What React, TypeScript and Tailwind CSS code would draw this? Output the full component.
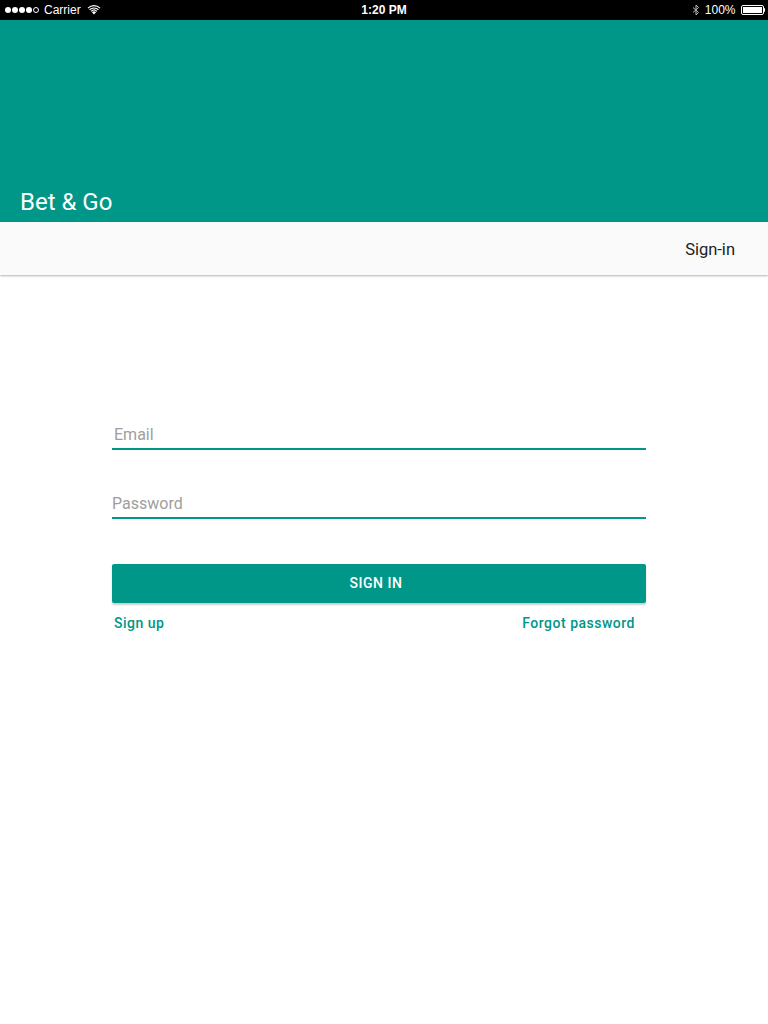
import React from "react";

function Wifi() {
  return (
    <svg width="14" height="10" viewBox="0 0 14 10" fill="white">
      <path d="M7 9.5 L4.9 7.2 A3 3 0 0 1 9.1 7.2 Z" />
      <path d="M3.7 5.9 A4.8 4.8 0 0 1 10.3 5.9 L9.5 6.8 A3.6 3.6 0 0 0 4.5 6.8 Z" />
      <path d="M2.2 4.3 A7 7 0 0 1 11.8 4.3 L11 5.2 A5.8 5.8 0 0 0 3 5.2 Z" />
      <path d="M0.6 2.7 A9.2 9.2 0 0 1 13.4 2.7 L12.6 3.6 A8 8 0 0 0 1.4 3.6 Z" />
    </svg>
  );
}

function Bluetooth() {
  return (
    <svg width="8" height="12" viewBox="0 0 8 12" fill="none" stroke="#bbb" strokeWidth="1">
      <path d="M1 3.5 L6.5 8.5 L4 11 L4 1 L6.5 3.5 L1 8.5" />
    </svg>
  );
}

function Battery() {
  return (
    <div className="flex items-center">
      <div className="w-[23px] h-[10px] border border-white rounded-[2px] p-[1px]">
        <div className="w-full h-full bg-white" />
      </div>
      <div className="w-[1.5px] h-[4px] bg-white rounded-r-sm" />
    </div>
  );
}

function Dots() {
  return (
    <div className="flex items-center gap-[1px]">
      <div className="w-[6px] h-[6px] rounded-full bg-white" />
      <div className="w-[6px] h-[6px] rounded-full bg-white" />
      <div className="w-[6px] h-[6px] rounded-full bg-white" />
      <div className="w-[6px] h-[6px] rounded-full bg-white" />
      <div className="w-[6px] h-[6px] rounded-full border border-white" />
    </div>
  );
}

export default function App() {
  return (
    <div className="w-[768px] h-[1024px] bg-white font-['Roboto',sans-serif] flex flex-col">
      <div className="h-[20px] bg-black text-white flex items-center pl-[5px] text-[12px] relative font-['Liberation_Sans',sans-serif]">
        <div className="flex items-center">
          <Dots />
          <span className="ml-[5px]">Carrier</span>
          <span className="ml-[6px]">
            <Wifi />
          </span>
        </div>
        <div className="absolute left-0 right-0 text-center font-bold text-[12px]">1:20 PM</div>
        <div className="ml-auto flex items-center gap-[5px] mr-[3px]">
          <Bluetooth />
          <span>100%</span>
          <Battery />
        </div>
      </div>
      <div className="h-[202px] bg-[#009688] flex items-end px-[20px] pb-[2px]">
        <span className="text-white text-[24px]">Bet &amp; Go</span>
      </div>
      <div className="h-[53px] bg-[#fafafa] shadow-[0_1px_2px_rgba(0,0,0,0.3)] flex items-center justify-end pr-[33px] pt-[4px]">
        <span className="text-[16.5px] text-[#212121]">Sign-in</span>
      </div>
      <div className="ml-[112px] w-[534px] mt-[148px] flex flex-col">
        <div className="border-b-2 border-[#009688] pb-[1px] pl-[2px]">
          <span className="text-[16px] text-[#9e9e9e]">Email</span>
        </div>
        <div className="border-b-2 border-[#009688] pb-[1px] mt-[42px]">
          <span className="text-[16px] text-[#9e9e9e]">Password</span>
        </div>
        <button className="mt-[45px] h-[39px] pr-[6px] bg-[#009688] rounded-[2px] shadow-[0_2px_2px_rgba(0,0,0,0.2)] text-white text-[14px] font-medium tracking-[0.5px]">
          SIGN IN
        </button>
        <div className="flex justify-between mt-[10px] pl-[2px] pr-[11px] text-[14px] font-medium text-[#009688] tracking-[0.5px]">
          <span>Sign up</span>
          <span>Forgot password</span>
        </div>
      </div>
    </div>
  );
}
